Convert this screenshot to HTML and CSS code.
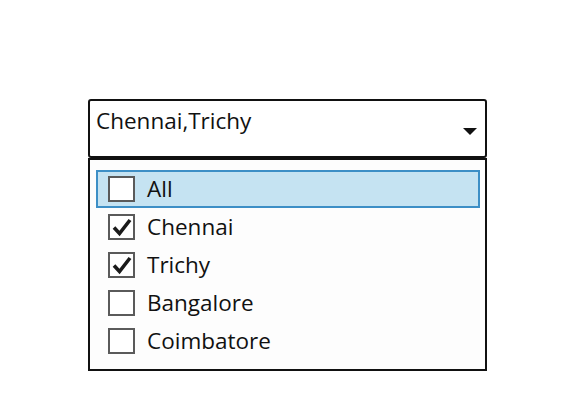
FILE: index.html
```html
<!DOCTYPE html>
<html lang="en">
<head>
    <meta charset="UTF-8">
    <meta name="viewport" content="width=device-width, initial-scale=1.0">
    <title>Multi Select Combo</title>
    <link rel="stylesheet" href="styles.css">
</head>
<body>
<div class="combo-container">
    <div class="combo">
        <span class="combo-text">Chennai,Trichy</span>
        <svg class="combo-arrow" width="14" height="7" viewBox="0 0 14 7">
            <polygon points="0,0 14,0 7,7" fill="#111"/>
        </svg>
    </div>
    <div class="popup">
        <div class="item item-hover">
            <span class="check"></span>
            <span class="label">All</span>
        </div>
        <div class="item">
            <span class="check">
                <svg width="22" height="22" viewBox="0 0 22 22"><path d="M3 11.5 L8.5 17.5 L19 4" fill="none" stroke="#1a1a1a" stroke-width="3.6"/></svg>
            </span>
            <span class="label">Chennai</span>
        </div>
        <div class="item">
            <span class="check">
                <svg width="22" height="22" viewBox="0 0 22 22"><path d="M3 11.5 L8.5 17.5 L19 4" fill="none" stroke="#1a1a1a" stroke-width="3.6"/></svg>
            </span>
            <span class="label">Trichy</span>
        </div>
        <div class="item">
            <span class="check"></span>
            <span class="label">Bangalore</span>
        </div>
        <div class="item">
            <span class="check"></span>
            <span class="label">Coimbatore</span>
        </div>
    </div>
</div>
</body>
</html>
```

FILE: styles.css
```css
body {
    font-family: "Open Sans", "Noto Sans", sans-serif;
    margin: 0;
    padding: 0;
    background-color: #ffffff;
    color: #111;
}
.combo-container {
    width: 399px;
    padding: 99px 0 0 88px;
}
.combo {
    box-sizing: border-box;
    height: 59px;
    border: 2px solid #111;
    border-radius: 3px;
    display: flex;
    align-items: flex-start;
    justify-content: space-between;
    padding: 5px 8px 0 6px;
}
.combo-text {
    font-size: 22.5px;
    line-height: 30px;
}
.combo-arrow {
    margin-top: 22px;
}
.popup {
    box-sizing: border-box;
    height: 213px;
    border: 2px solid #111;
    background-color: #fdfdfd;
    padding: 10px 5px 9px 6px;
}
.item {
    box-sizing: border-box;
    height: 38px;
    border: 1px solid transparent;
    display: flex;
    align-items: center;
    padding-left: 11px;
}
.item-hover {
    background-color: #c5e3f2;
    border: 2px solid #3d8fc6;
    padding-left: 10px;
}
.check {
    box-sizing: border-box;
    width: 27px;
    height: 26px;
    border: 2px solid #5a5a5a;
    background-color: #fff;
    display: flex;
    align-items: center;
    justify-content: center;
}
.label {
    font-size: 22.5px;
    margin-left: 12px;
    line-height: 30px;
}
```
